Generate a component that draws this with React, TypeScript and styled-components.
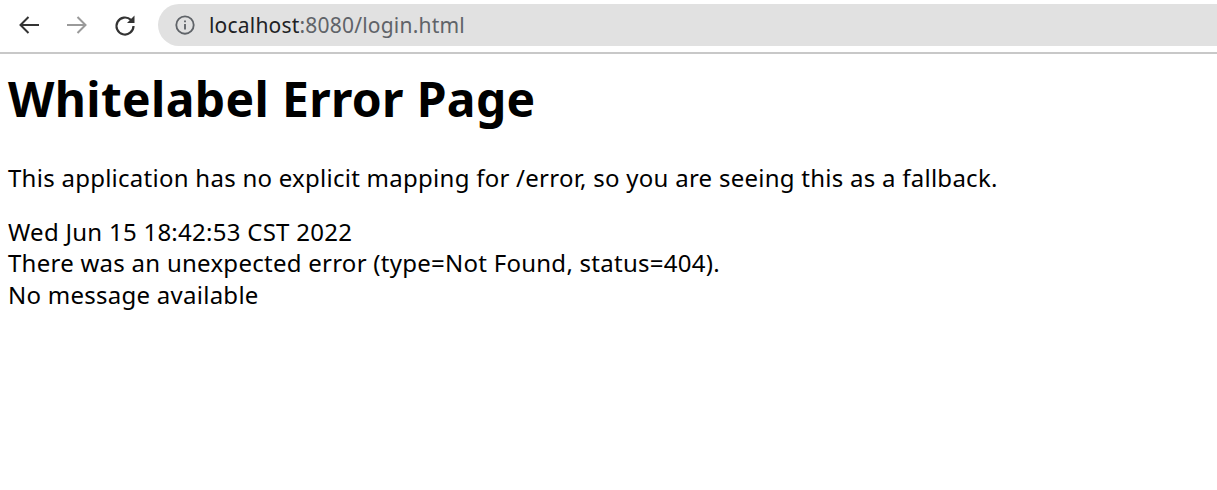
import styled, { createGlobalStyle } from 'styled-components';

const GlobalStyle = createGlobalStyle`
  body {
    margin: 0;
    background: #fff;
    font-family: 'Noto Sans', 'Open Sans', sans-serif;
    color: #000;
  }
`;

const Toolbar = styled.div`
  display: flex;
  align-items: center;
  height: 54px;
  box-sizing: border-box;
  border-bottom: 2px solid #c8c8c8;
  padding: 4px 0 6px 17px;
`;

const NavIcon = styled.svg<{ $muted?: boolean }>`
  width: 24px;
  height: 24px;
  margin-right: 24px;
  flex-shrink: 0;
  fill: none;
  stroke: ${(p) => (p.$muted ? '#9a9a9a' : '#333')};
  stroke-width: 2;
`;

const ReloadIcon = styled.svg`
  width: 24px;
  height: 24px;
  margin-right: 21px;
  flex-shrink: 0;

  path {
    fill: none;
    stroke: #333;
    stroke-width: 2.2;
  }

  polygon {
    fill: #333;
  }
`;

const AddressBar = styled.div`
  flex: 1;
  height: 42px;
  background: #e1e1e1;
  border-radius: 21px 0 0 21px;
  display: flex;
  align-items: center;
  padding-left: 16px;
  font-size: 21px;
  letter-spacing: 0.2px;
  color: #5f6368;
`;

const InfoIcon = styled.svg`
  width: 22px;
  height: 22px;
  margin-right: 13px;
  fill: none;
  stroke: #5f6368;
  stroke-width: 2;
`;

const Host = styled.span`
  color: #202124;
`;

const Main = styled.main`
  padding: 0 8px;
`;

const Title = styled.h1`
  font-size: 48px;
  font-weight: 700;
  line-height: 65px;
  letter-spacing: 0.33px;
  margin: 12px 0 31px;
`;

const Paragraph = styled.p`
  font-size: 24px;
  line-height: 31.5px;
  letter-spacing: 0.26px;
  margin: 0 0 22px;
`;

const App = () => (
  <>
    <GlobalStyle />
    <Toolbar>
      <NavIcon viewBox="0 0 24 24">
        <path d="M22 12H4M11.5 4 3.5 12l8 8" />
      </NavIcon>
      <NavIcon viewBox="0 0 24 24" $muted>
        <path d="M2 12h18M12.5 4l8 8-8 8" />
      </NavIcon>
      <ReloadIcon viewBox="0 0 24 24">
        <path d="M20.5 13a8.5 8.5 0 1 1-2.6-6.1" />
        <polygon points="21.5,2.5 21.5,10 14,10" />
      </ReloadIcon>
      <AddressBar>
        <InfoIcon viewBox="0 0 24 24">
          <circle cx="12" cy="12" r="9.5" />
          <path d="M12 11v6M12 7v2" />
        </InfoIcon>
        <Host>localhost</Host>:8080/login.html
      </AddressBar>
    </Toolbar>
    <Main>
      <Title>Whitelabel Error Page</Title>
      <Paragraph>This application has no explicit mapping for /error, so you are seeing this as a fallback.</Paragraph>
      <Paragraph>
        Wed Jun 15 18:42:53 CST 2022
        <br />
        There was an unexpected error (type=Not Found, status=404).
        <br />
        No message available
      </Paragraph>
    </Main>
  </>
);

export default App;
